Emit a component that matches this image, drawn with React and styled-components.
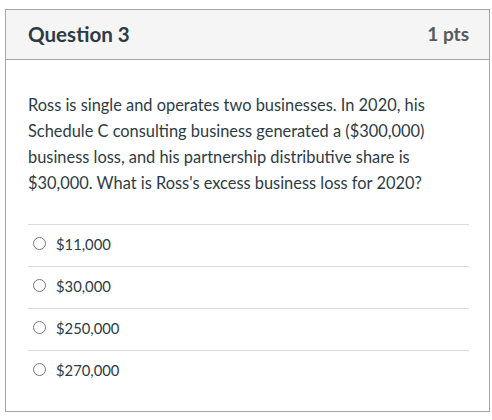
import React from "react";
import styled, { createGlobalStyle } from "styled-components";

const Global = createGlobalStyle`
  html, body { margin: 0; padding: 0; background: #fff; }
  body { font-family: Lato, "Noto Sans", sans-serif; color: #2d3b45; }
`;

const Panel = styled.div`
  margin: 9px 0 0 5px;
  width: 485px;
  box-sizing: border-box;
  border: 1px solid #a5a5a5;
  background: #fff;
`;

const Header = styled.div`
  height: 50px;
  box-sizing: border-box;
  background: #f5f5f5;
  border-bottom: 1px solid #a5a5a5;
  display: flex;
  align-items: center;
  justify-content: space-between;
  padding: 0 20px 2px 22px;
`;

const Title = styled.div`
  font-size: 20.6px;
  font-weight: 700;
  color: #2d3b45;
`;

const Points = styled.div`
  font-size: 19px;
  font-weight: 700;
  color: #555a5e;
`;

const Body = styled.div`
  padding: 32px 20px 19px 22px;
`;

const Text = styled.p`
  margin: 0 0 28px;
  font-size: 16.4px;
  line-height: 26px;
  color: #2d3b45;
`;

const Answers = styled.div`
  display: flex;
  flex-direction: column;
`;

const Answer = styled.label`
  display: flex;
  align-items: center;
  height: 42px;
  box-sizing: border-box;
  border-top: 1px solid #dadada;
  padding: 0 0 4px 5px;
  gap: 10px;
  font-size: 14.8px;
  color: #2d3b45;
`;

const Radio = styled.span`
  width: 11px;
  height: 11px;
  border: 1px solid #777;
  border-radius: 50%;
  box-sizing: content-box;
  flex: none;
`;

const answers = ["$11,000", "$30,000", "$250,000", "$270,000"];

export default function App() {
  return (
    <>
      <Global />
      <Panel>
        <Header>
          <Title>Question 3</Title>
          <Points>1 pts</Points>
        </Header>
        <Body>
          <Text>
            Ross is single and operates two businesses. In 2020, his Schedule C consulting business generated a ($300,000) business loss, and his partnership distributive share is $30,000. What is Ross's excess business loss for 2020?
          </Text>
          <Answers>
            {answers.map((a) => (
              <Answer key={a}>
                <Radio />
                <span>{a}</span>
              </Answer>
            ))}
          </Answers>
        </Body>
      </Panel>
    </>
  );
}
